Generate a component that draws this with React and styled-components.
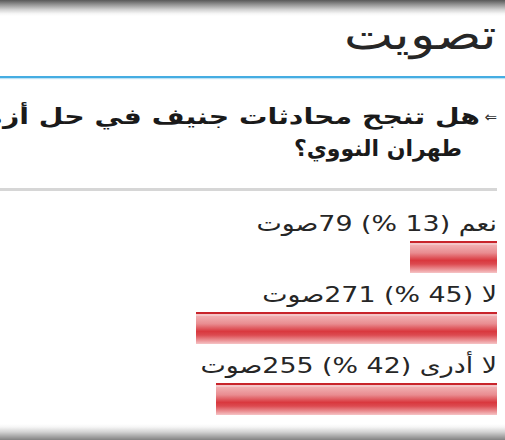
import React from 'react';
import styled, { createGlobalStyle } from 'styled-components';

const GlobalStyle = createGlobalStyle`
    html, body {
        margin: 0;
        padding: 0;
        height: 100%;
        background: #ffffff;
        overflow: hidden;
    }
    #root {
        height: 100%;
    }
`

const Page = styled.div`
    height: 100vh;
    display: flex;
    flex-direction: column;
    direction: rtl;
    overflow: hidden;
    font-family: "DejaVu Sans", "Noto Sans", sans-serif;
`

const Shade = styled.div`
    flex: 0 0 ${props => props.$size}px;
    background: linear-gradient(${props => props.$bottom ? 'to top' : 'to bottom'}, #585858 0%, #8c8c8c 25%, #d2d2d2 60%, #f6f6f6 85%, #ffffff 100%);
`

const Panel = styled.section`
    flex: 1;
    width: 678px;
    align-self: flex-start;
    background: #ffffff;
`

const Header = styled.header`
    height: 62px;
    padding-right: 8px;
    border-bottom: 2px solid #45ade2;
    box-shadow: 0 1px 1px rgba(69, 173, 226, 0.35);
    box-sizing: border-box;
`

const Title = styled.h2`
    margin: 0;
    padding-top: 2px;
    font-size: 42px;
    line-height: 34px;
    font-weight: 300;
    color: #262626;
    transform: scaleX(1.24);
    transform-origin: right center;
`

const Question = styled.h3`
    display: flex;
    margin: 0 8px 0 0;
    padding: 23px 0 23px 0;
    font-size: 22px;
    line-height: 32px;
    font-weight: bold;
    color: #1a1a1a;
    white-space: nowrap;
    border-bottom: 3px solid #d6d6d6;
`

const Marker = styled.span`
    flex: 0 0 17px;
    font-size: 15px;
    font-weight: normal;
    color: #333;
`

const QuestionText = styled.div`
    flex: 1;
`

const QuestionLine = styled.span`
    display: block;
    padding-right: ${props => props.$indent || 0}px;
    transform: scaleX(${props => props.$stretch || 1});
    transform-origin: right center;
`

const Options = styled.ul`
    list-style: none;
    margin: 0 8px 0 0;
    padding: 20px 0 0 0;
`

const Option = styled.li`
    margin-bottom: 9px;
`

const Label = styled.div`
    font-size: 22px;
    line-height: 26px;
    color: #262626;
    margin-bottom: 4px;
    transform: scaleX(1.22);
    transform-origin: right center;
`

const Bar = styled.div`
    height: 28px;
    border-top: 2px solid #c8242b;
    padding-top: 2px;
    background: #f4c6c8;
    &::after {
        content: '';
        display: block;
        height: 28px;
        background: linear-gradient(to bottom, #f1b0b2 0%, #e98c90 28%, #d9383e 55%, #dc4a50 68%, #ec9598 88%, #f6c4c6 100%);
    }
`

const answers = [
    { label: 'نعم', percent: 13, votes: 79 },
    { label: 'لا', percent: 45, votes: 271 },
    { label: 'لا أدرى', percent: 42, votes: 255 },
]

const App = () => {
    return (
        <>
            <GlobalStyle />
            <Page>
                <Shade $size={16} />
                <Panel>
                    <Header>
                        <Title>تصويت</Title>
                    </Header>
                    <Question>
                        <Marker>⇐</Marker>
                        <QuestionText>
                            <QuestionLine $stretch={1.29}>هل تنجح محادثات جنيف في حل أزمة برنامج</QuestionLine>
                            <QuestionLine $indent={18}>طهران النووي؟</QuestionLine>
                        </QuestionText>
                    </Question>
                    <Options>
                        {answers.map(answer => (
                            <Option key={answer.label}>
                                <Label>{answer.label} ({answer.percent} %) {answer.votes}صوت</Label>
                                <Bar style={{ width: `${answer.percent}%` }} />
                            </Option>
                        ))}
                    </Options>
                </Panel>
                <Shade $size={20} $bottom />
            </Page>
        </>
    )
}

export default App
